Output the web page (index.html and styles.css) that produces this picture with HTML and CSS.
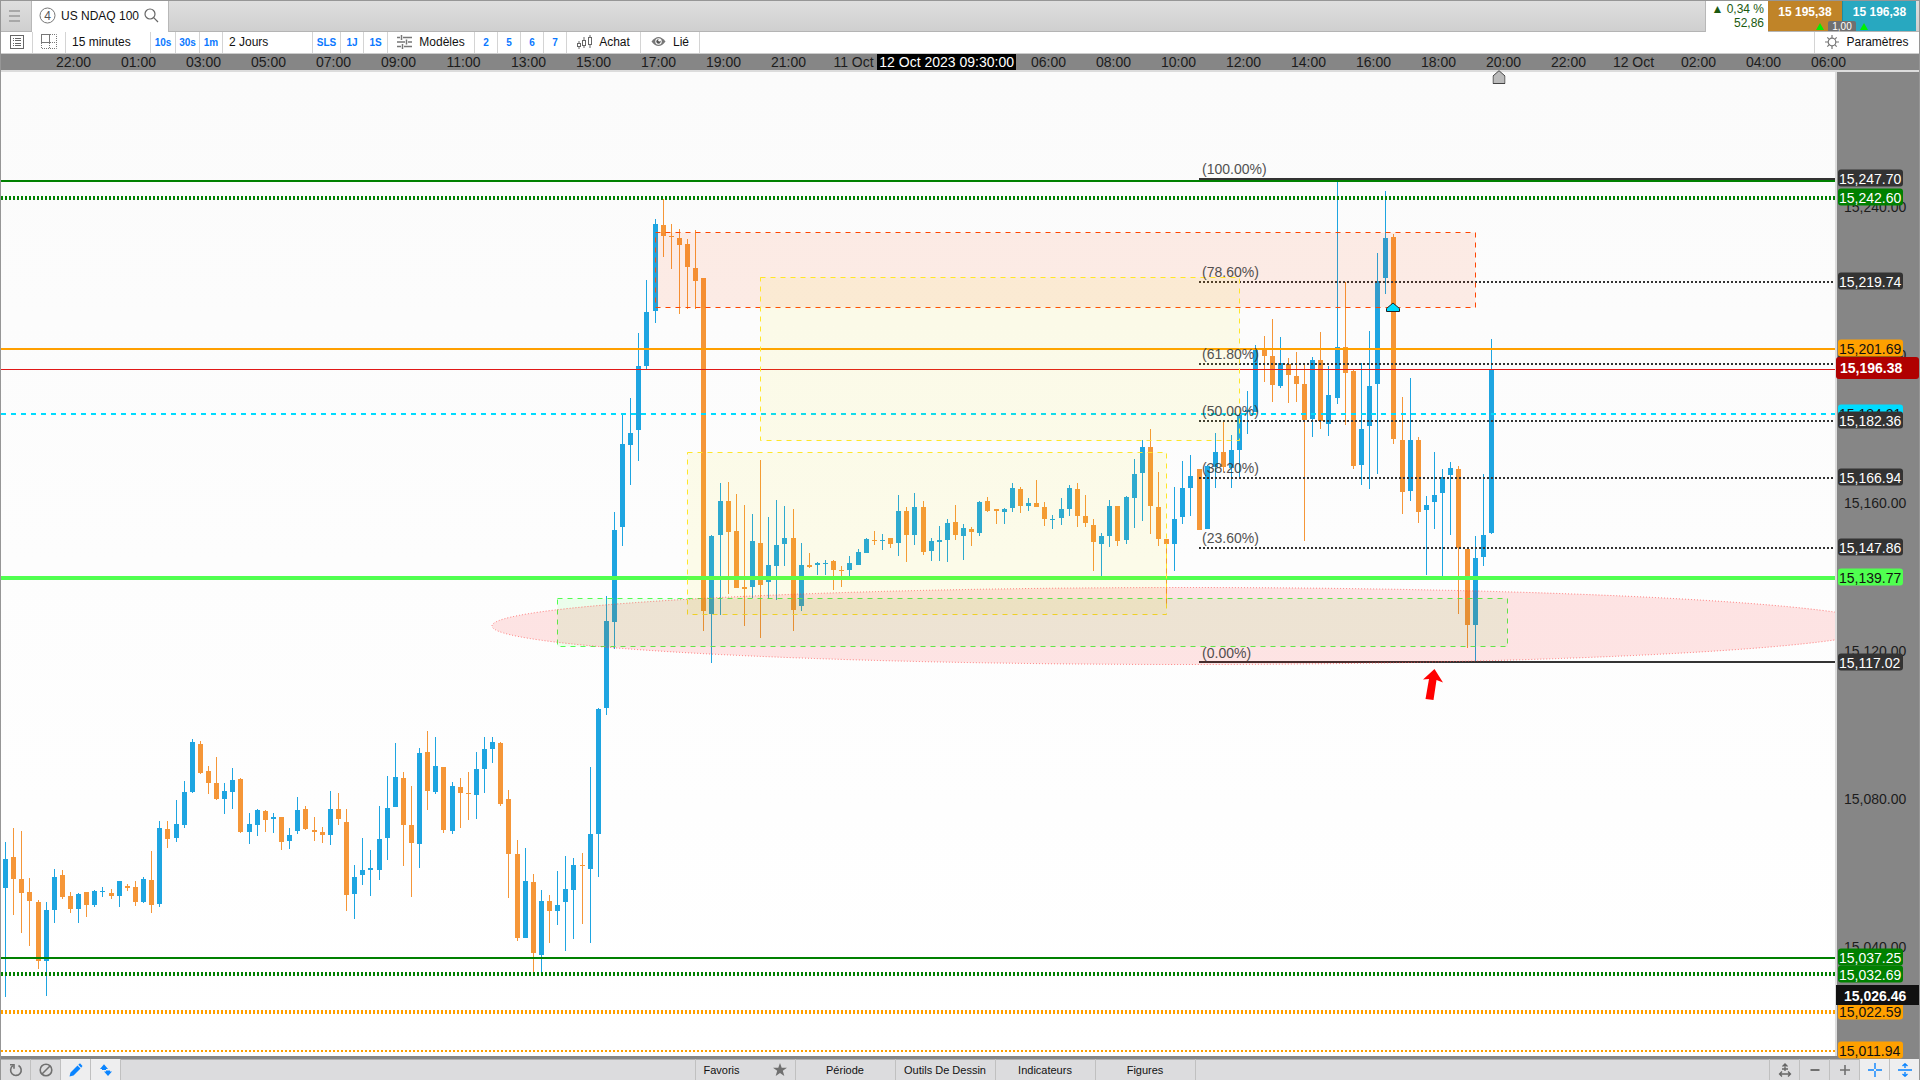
FILE: index.html
```html
<!DOCTYPE html>
<html lang="fr">
<head>
  <meta charset="UTF-8" />
  <meta name="viewport" content="width=device-width, initial-scale=1.0"/>
  <title>US NDAQ 100</title>
  <link rel="stylesheet" href="styles.css">
</head>
<body>
  <div class="app">
    <!-- Tabs and quote -->
    <header class="tabs">
      <button class="menu-btn" aria-label="Menu">
        <svg width="12" height="12" viewBox="0 0 12 12"><path d="M0 1h11M0 6h11M0 11h11" stroke="#a8a8a8" stroke-width="2"/></svg>
      </button>
      <button class="tab">
        <svg width="17" height="17" viewBox="0 0 17 17"><circle cx="8.500" cy="8.500" r="7.500" fill="none" stroke="#777"/><text x="8.500" y="12.500" text-anchor="middle" class="tab-num">4</text></svg>
        <span>US NDAQ 100</span>
        <svg width="15" height="15" viewBox="0 0 15 15" fill="none" stroke="#666" stroke-width="1.200"><circle cx="6" cy="6" r="5"/><path d="M9.700 9.700 14 14"/></svg>
      </button>
      <div class="change">
        <div><span class="up">▲</span> 0,34 %</div>
        <div>52,86</div>
      </div>
      <div class="quotes">
        <button class="quote sell">15 195,38</button>
        <button class="quote buy">15 196,38</button>
        <div class="spread"><i class="tick-up"></i><span>1,00</span><i class="tick-up"></i></div>
      </div>
    </header>

    <!-- Toolbar -->
    <nav class="toolbar">
      <button aria-label="Liste">
        <svg width="14" height="14" viewBox="0 0 14 14" fill="none" stroke="#666"><rect x=".5" y=".5" width="13" height="13"/><path d="M5 3.500h6M5 5.500h6M5 8.500h6M5 10.500h6"/><path d="M3 3.500h1M3 5.500h1M3 8.500h1M3 10.500h1"/></svg>
      </button>
      <button aria-label="Disposition">
        <svg width="16" height="15" viewBox="0 0 16 15" fill="none" stroke="#777"><rect x=".5" y=".5" width="8" height="8"/><path d="M9 .5h6.500v14H.5V9M8.500 9v5M9 8.500h6" stroke-dasharray="1 1"/></svg>
      </button>
      <button class="wide">15 minutes</button>
      <button class="quick">10s</button>
      <button class="quick">30s</button>
      <button class="quick">1m</button>
      <button class="wide">2 Jours</button>
      <button class="quick">SLS</button>
      <button class="quick">1J</button>
      <button class="quick">1S</button>
      <button>
        <svg width="15" height="14" viewBox="0 0 15 14" stroke="#777" stroke-width="1.500"><path d="M0 2.500h3M6 2.500h9M0 7h8M11 7h4M0 11.500h4M7 11.500h8M4.500 0v5M9.500 4.500v5M5.500 9v5"/></svg>
        Modèles
      </button>
      <button class="quick">2</button>
      <button class="quick">5</button>
      <button class="quick">6</button>
      <button class="quick">7</button>
      <button>
        <svg width="15" height="14" viewBox="0 0 15 14" fill="none" stroke="#666"><rect x=".5" y="8.500" width="3" height="3"/><rect x="5.500" y="5.500" width="3" height="5"/><rect x="11.500" y="2.500" width="3" height="7"/><path d="M2 6v2M2 12v2M7 2v3M7 11v2M13 0v2M13 10v3"/></svg>
        Achat
      </button>
      <button>
        <svg width="15" height="11" viewBox="0 0 15 11"><path d="M.5 5.500Q7.500-3.500 14.500 5.500 7.500 14.500.5 5.500z" fill="#777"/><circle cx="7.500" cy="5.500" r="3.200" fill="#fff"/><circle cx="7.500" cy="5.500" r="2.200" fill="#555"/><circle cx="8.500" cy="4.300" r="1.200" fill="#fff"/></svg>
        Lié
      </button>
      <span></span>
      <button class="settings">
        <svg width="14" height="14" viewBox="0 0 14 14" fill="none" stroke="#777" stroke-width="1.200"><circle cx="7" cy="7" r="3.800"/><path d="M7 0v3M7 11v3M0 7h3M11 7h3M2.300 2.300l2 2M9.700 9.700l2 2M11.700 2.300l-2 2M4.300 9.700l-2 2"/></svg>
        Paramètres
      </button>
    </nav>

    <!-- Time scale -->
    <div class="timeline">
      <span>22:00</span><span>01:00</span><span>03:00</span><span>05:00</span><span>07:00</span><span>09:00</span><span>11:00</span>
      <span>13:00</span><span>15:00</span><span>17:00</span><span>19:00</span><span>21:00</span><span>11 Oct</span>
      <span class="cursor-cell"><b class="cursor-time">12 Oct 2023 09:30:00</b></span>
      <span>06:00</span><span>08:00</span><span>10:00</span><span>12:00</span><span>14:00</span><span>16:00</span><span>18:00</span>
      <span class="now">20:00<svg width="13" height="14" viewBox="0 0 13 14"><path d="M6.500.7 12.500 6v7.500H.5V6z" fill="#bbb" stroke="#444"/></svg></span>
      <span>22:00</span><span>12 Oct</span><span>02:00</span><span>04:00</span><span>06:00</span>
    </div>

    <!-- Chart -->
    <main class="chart">
      <div class="plot" id="plot">
        <svg viewBox="1 72 1834 984" preserveAspectRatio="none">
          <g id="candles" shape-rendering="crispEdges"></g>

          <g class="levels">
            <path d="M1199 179H1835M1199 662H1835" stroke="#333" stroke-width="2"/>
            <path d="M1199 282H1835M1199 364H1835M1199 421H1835M1199 478H1835M1199 548H1835" stroke="#333" stroke-width="2" stroke-dasharray="2 2"/>
            <path d="M1 181H1835M1 958H1835" stroke="#008000" stroke-width="2"/>
            <path d="M1 198H1835M1 974H1835" stroke="#008000" stroke-width="4" stroke-dasharray="2 2"/>
            <path d="M1 1012H1835" stroke="#ffa000" stroke-width="4" stroke-dasharray="2 2"/>
            <path d="M1 1051H1835" stroke="#ffa000" stroke-width="2" stroke-dasharray="2 2"/>
            <path d="M1 349H1835" stroke="#ffa000" stroke-width="2"/>
            <path d="M1 369.500H1835" stroke="#e01818"/>
            <path d="M1 414H1835" stroke="#00dcff" stroke-width="2" stroke-dasharray="5 5"/>
            <path d="M1 578H1835" stroke="#50ff50" stroke-width="4"/>
          </g>

          <g stroke-dasharray="5 5">
            <rect x="655.500" y="232.500" width="820" height="75" fill="#ff4500" fill-opacity=".09" stroke="#ff4500"/>
            <rect x="760.500" y="277.500" width="479" height="163" fill="#f5e600" fill-opacity=".08" stroke="#ffe628"/>
            <rect x="687.500" y="452.500" width="479" height="162" fill="#f5e600" fill-opacity=".08" stroke="#ffe628"/>
            <rect x="557.500" y="598.500" width="950" height="48" fill="#50ff50" fill-opacity=".1" stroke="#50ff50"/>
          </g>
          <ellipse cx="1187" cy="626" rx="695" ry="38.500" fill="#ff0000" fill-opacity=".1" stroke="#f44" stroke-opacity=".7" stroke-dasharray="1 2"/>

          <path d="M1386.500 311.500v-3l6.500-5.500 6.500 5.500v3z" fill="#00dcff" stroke="#222"/>
          <path d="M1434.500 669 1443 682.500 1436.500 680 1433.500 700 1425.500 699 1429 679 1423 679.500z" fill="#f00"/>
        </svg>
      </div>
      <div class="axis" id="axis"></div>
    </main>

    <!-- Bottom bar -->
    <footer class="bottombar">
      <button class="tool" aria-label="Recharger">
        <svg width="14" height="14" viewBox="0 0 14 14" fill="none" stroke="#707070" stroke-width="1.600"><path d="M9.500 2.500A5.300 5.300 0 1 1 4 2.700"/><path d="M1 1.700h4v4"/></svg>
      </button>
      <button class="tool" aria-label="Masquer">
        <svg width="14" height="14" viewBox="0 0 14 14" fill="none" stroke="#707070" stroke-width="1.600"><circle cx="7" cy="7" r="5.800"/><path d="M3 11l8-8"/></svg>
      </button>
      <button class="tool on" aria-label="Dessiner">
        <svg width="14" height="14" viewBox="0 0 14 14" fill="#0a84ff"><path d="M.5 13.500 1.500 9.500 8.500 2.500 11.500 5.500 4.500 12.500zM9.300 1.700 11 .3 13.500 3 12.200 4.700z"/></svg>
      </button>
      <button class="tool on" aria-label="Ordre">
        <svg width="12" height="12" viewBox="0 0 12 12" fill="#0a84ff"><path d="M0 5 4 .3 8 5H6v1H2V5zM4 7.500h2v-1h4v1h2L8 12z"/></svg>
      </button>
      <div class="panels">
        <button class="fav">Favoris
          <svg width="14" height="13" viewBox="0 0 14 13" fill="#707070"><path d="M7 0l1.700 4.700H14L9.800 7.800 11.300 13 7 9.900 2.700 13l1.500-5.200L0 4.700h5.300z"/></svg>
        </button>
        <button>Période</button>
        <button>Outils De Dessin</button>
        <button>Indicateurs</button>
        <button>Figures</button>
      </div>
      <button class="tool left" aria-label="Ajuster">
        <svg width="14" height="14" viewBox="0 0 14 14" fill="none" stroke="#666" stroke-width="1.300"><path d="M7 1v7M4.500 3.500 7 1l2.500 2.500M4 6h6M1.500 11h11M4 8.500 1.500 11 4 13.500M10 8.500l2.500 2.500-2.500 2.500"/></svg>
      </button>
      <button class="tool left" aria-label="Zoom arrière">
        <svg width="12" height="12" viewBox="0 0 12 12"><path d="M1.500 6h9" stroke="#707070" stroke-width="2"/></svg>
      </button>
      <button class="tool left" aria-label="Zoom avant">
        <svg width="12" height="12" viewBox="0 0 12 12"><path d="M1 6h10M6 1v10" stroke="#707070" stroke-width="1.600"/></svg>
      </button>
      <button class="tool left on" aria-label="Réticule">
        <svg width="14" height="14" viewBox="0 0 14 14"><path d="M0 7h6M8 7h6M7 0v6M7 8v6" stroke="#0a84ff" stroke-width="1.400"/></svg>
      </button>
      <button class="tool left on" aria-label="Échelle verticale">
        <svg width="14" height="14" viewBox="0 0 14 14" fill="none" stroke="#0a84ff" stroke-width="1.400"><path d="M0 7h14M7 5V1M4.500 3 7 .8 9.500 3M7 9v4M4.500 11 7 13.200 9.500 11"/></svg>
      </button>
    </footer>
  </div>

  <script src="script.js"></script>
</body>
</html>
```
FILE: styles.css
```css
* {
  box-sizing: border-box;
}

body {
  margin: 0;
  font-family: "Liberation Sans", Arial, sans-serif;
  font-size: 12px;
  color: #111;
  overflow: hidden;
}

button {
  font: inherit;
  color: inherit;
  background: none;
  border: none;
  padding: 0;
  white-space: nowrap;
  cursor: pointer;
}

svg {
  display: block;
  flex: none;
}

.app {
  display: flex;
  flex-direction: column;
  height: 100vh;
  border: 1px solid #969696;
  border-bottom: none;
}

/* tabs */
.tabs {
  display: flex;
  height: 31px;
  padding-right: 3px;
  background: linear-gradient(#dedede, #cfcfcf);
  border-bottom: 1px solid #b4b4b4;
}

.menu-btn {
  display: flex;
  align-items: center;
  justify-content: center;
  width: 31px;
  padding-right: 2px;
  border-right: 1px solid #b8b8b8;
}

.tab {
  display: flex;
  align-items: center;
  gap: 5px;
  height: 31px;
  padding: 0 9px 2px 7px;
  background: #fff;
  border-right: 1px solid #b8b8b8;
}

.tab-num {
  font-size: 12px;
  fill: #555;
}

.change {
  width: 63px;
  height: 31px;
  margin-left: auto;
  padding: 1px 4px 0 0;
  border-left: 1px solid #b8b8b8;
  background: #fff;
  color: #1c5a10;
  line-height: 14px;
  text-align: right;
}

.up {
  font-size: 12px;
}

.quotes {
  position: relative;
  display: flex;
}

.quote {
  width: 74px;
  padding-bottom: 9px;
  color: #fff;
  font-weight: bold;
}

.sell {
  background: #c08428;
}

.buy {
  background: #28a8c0;
  border-left: 1px solid #1c8ca4;
}

.spread {
  position: absolute;
  left: 0;
  right: 0;
  bottom: 0;
  display: flex;
  justify-content: center;
  align-items: center;
  gap: 4px;
  pointer-events: none;
}

.spread span {
  width: 28px;
  height: 10px;
  border-radius: 2px 2px 0 0;
  background: #707070;
  color: #fff;
  font-size: 10px;
  line-height: 11px;
  text-align: center;
}

.tick-up {
  border: 4px solid transparent;
  border-top: none;
  border-bottom: 7px solid #00f000;
}

/* toolbar */
.toolbar {
  display: grid;
  grid-template-columns: 32px 33px 85px 25px 24px 23px 90px 28px 23px 24px 87px 23px 23px 23px 23px 74px 59px 1fr 105px;
  height: 22px;
  background: #fff;
  border-bottom: 1px solid #ccc;
}

.toolbar button {
  display: flex;
  align-items: center;
  justify-content: center;
  gap: 7px;
  padding-bottom: 2px;
  border-right: 1px solid #d4d4d4;
}

.toolbar .wide {
  justify-content: flex-start;
  padding-left: 6px;
}

.toolbar .quick {
  padding-bottom: 0;
  color: #0a78ff;
  font-size: 10px;
  font-weight: bold;
}

.toolbar .settings {
  border-left: 1px solid #d4d4d4;
  border-right: none;
}

/* time scale */
.timeline {
  display: grid;
  grid-template-columns: repeat(28, 1fr);
  height: 18px;
  padding: 0 58px 0 40px;
  background: #868686;
  border-bottom: 2px solid #dcdcdc;
  color: #1c1c1c;
  font-size: 14px;
  line-height: 16px;
  text-align: center;
  white-space: nowrap;
}

.cursor-cell {
  position: relative;
  grid-column: span 2;
}

.cursor-time {
  position: absolute;
  right: 0;
  padding: 0 2px;
  background: #000;
  color: #fff;
  font-weight: normal;
}

.now {
  position: relative;
}

.now svg {
  position: absolute;
  top: 16px;
  left: 43%;
  transform: translateX(-50%);
  z-index: 1;
}

/* chart */
.chart {
  display: flex;
  flex: 1;
  min-height: 0;
}

.plot {
  position: relative;
  flex: 1;
  min-width: 0;
  background: linear-gradient(#fbfbfb, #fff);
}

.plot svg {
  width: 100%;
  height: 100%;
}

.candle-up {
  fill: #1ea5e1;
}

.candle-down {
  fill: #f59638;
}

.levels {
  fill: none;
}

.fib-label {
  position: absolute;
  left: 65%;
  margin: -17px 0 0 9px;
  color: #333;
  font-size: 14px;
  line-height: 16px;
  opacity: 0.85;
}

.axis {
  position: relative;
  width: 84px;
  border-left: 2px solid #dcdcdc;
  background: #868686;
  font-size: 14px;
}

.price {
  position: absolute;
  left: 1px;
  width: 65px;
  height: 17px;
  padding-left: 1px;
  border-radius: 3px;
  line-height: 18px;
  transform: translateY(-50%);
}

.price.tick {
  left: 6px;
  color: #1c1c1c;
}

.price.dark {
  background: #333;
  color: #fff;
}

.price.green {
  background: #008000;
  color: #fff;
}

.price.orange {
  background: #ffa000;
  color: #111;
}

.price.cyan {
  background: #00dcff;
  color: #111;
}

.price.lime {
  background: #50ff50;
  color: #111;
}

.price.last,
.price.cursor {
  left: -1px;
  right: 0;
  width: auto;
  height: 22px;
  padding-left: 4px;
  color: #fff;
  font-weight: bold;
  line-height: 22px;
}

.price.last {
  background: #b00000;
}

.price.cursor {
  height: 20px;
  margin-top: -2px;
  padding-left: 8px;
  border-radius: 0;
  background: #111;
}

/* bottom bar */
.bottombar {
  display: flex;
  height: 24px;
  border-top: 3px solid #868686;
  background: #dcdcde;
  box-shadow: inset 0 1px #b0b0b0;
  font-size: 11px;
}

.tool {
  display: flex;
  align-items: center;
  justify-content: center;
  width: 30px;
  border-right: 1px solid #c0c0c0;
}

.tool.left {
  border-right: none;
  border-left: 1px solid #c0c0c0;
}

.tool.on {
  background: #eeeeef;
}

.panels {
  display: grid;
  grid-template-columns: repeat(5, 100px);
  margin: 0 auto;
  border-left: 1px solid #c0c0c0;
}

.panels button {
  border-right: 1px solid #c0c0c0;
}

.panels .fav {
  display: flex;
  align-items: center;
  justify-content: space-between;
  padding: 0 8px;
}
```
FILE: script.js
```js
// x, high, body top, body bottom, low, direction (1 = up, 0 = down)
const candles = [
  [5,842,859,888,997,1],[13,828,857,879,915,0],[21,831,879,893,933,0],[29,878,892,901,946,0],
  [38,900,902,961,969,0],[46,902,910,961,996,1],[54,869,877,910,923,1],[62,870,875,897,899,0],
  [70,892,896,909,913,0],[78,893,894,909,923,1],[86,892,892,905,917,0],[94,890,891,905,907,1],
  [102,887,891,892,897,1],[111,889,893,896,899,0],[119,881,881,896,907,1],[127,884,886,888,891,0],
  [135,881,887,902,906,0],[143,877,879,902,903,1],[151,851,880,905,913,0],[159,821,828,904,907,1],
  [167,821,829,839,848,0],[176,800,824,838,842,1],[184,781,792,825,828,1],[192,739,742,792,793,1],
  [200,741,744,773,774,0],[208,766,771,783,794,0],[216,757,783,799,800,0],[224,783,791,799,814,1],
  [232,768,780,792,809,1],[240,778,779,832,833,0],[249,813,824,832,844,1],[257,809,810,825,836,1],
  [265,810,811,820,832,0],[273,813,817,819,833,1],[281,817,817,842,850,0],[289,828,835,841,849,1],
  [297,797,810,831,834,1],[305,806,809,829,830,0],[314,817,830,832,841,0],[322,827,832,835,843,0],
  [330,791,809,835,845,1],[338,793,809,819,825,0],[346,809,822,895,911,0],[354,865,877,894,919,1],
  [362,838,870,875,885,1],[370,850,868,870,896,1],[379,806,839,870,880,1],[387,776,808,838,860,1],
  [395,743,777,807,807,1],[403,772,778,825,866,0],[411,786,825,843,897,0],[419,748,753,844,868,1],
  [427,731,752,791,810,0],[435,737,766,792,794,1],[443,767,767,830,833,0],[452,782,786,831,834,1],
  [460,778,787,793,828,0],[468,772,793,794,820,0],[476,752,769,795,819,1],[484,737,749,769,793,1],
  [492,737,742,749,763,1],[500,742,743,804,806,0],[508,790,799,854,898,0],[517,840,854,938,941,0],
  [525,848,881,938,938,1],[533,874,882,953,972,0],[541,890,901,955,972,1],[549,895,901,911,943,0],
  [557,871,905,911,925,1],[565,856,889,902,951,1],[573,858,865,890,939,1],[582,853,865,866,924,0],
  [590,767,834,869,943,1],[598,708,709,834,877,1],[606,596,621,708,715,1],[614,512,530,622,649,1],
  [622,415,444,527,546,1],[630,398,433,445,485,1],[638,333,366,430,461,1],[646,280,312,366,369,1],
  [655,219,224,311,323,1],[663,199,225,236,257,0],[671,224,236,237,269,0],[679,229,238,245,314,0],
  [687,239,244,267,309,0],[695,230,268,281,309,0],[703,278,278,611,631,0],[711,535,536,614,663,1],
  [720,483,501,535,615,1],[728,482,501,532,594,0],[736,494,531,588,588,0],[744,505,587,589,626,0],
  [752,514,541,587,598,1],[760,460,543,585,638,0],[768,517,565,582,598,1],[776,500,545,566,600,1],
  [784,506,538,544,566,1],[793,509,538,610,631,0],[801,543,565,606,611,1],[809,553,565,567,568,0],
  [817,562,563,565,575,1],[825,560,563,564,575,1],[833,560,561,570,590,0],[841,566,570,571,587,0],
  [849,556,563,570,576,1],[858,549,552,565,565,1],[866,538,539,553,553,1],[874,531,540,541,545,0],
  [882,534,540,541,550,1],[890,538,538,544,548,0],[898,495,511,543,556,1],[906,507,511,535,562,0],
  [914,493,507,535,545,1],[923,501,507,552,555,0],[931,538,541,551,561,1],[939,526,540,542,561,1],
  [947,519,523,540,562,1],[955,505,522,535,540,0],[963,524,528,536,560,1],[971,527,529,532,546,0],
  [979,501,502,533,536,1],[987,497,501,511,512,0],[996,509,509,511,524,0],[1004,508,509,512,524,1],
  [1012,483,488,508,512,1],[1020,487,489,506,513,0],[1028,498,503,506,511,1],[1036,480,503,507,507,0],
  [1044,502,507,519,526,0],[1052,515,519,520,529,1],[1061,498,509,518,525,1],[1069,485,488,509,516,1],
  [1077,483,489,516,527,0],[1085,495,516,523,527,0],[1093,519,525,542,571,0],[1101,533,536,544,576,1],
  [1109,500,506,536,547,1],[1117,506,506,541,546,0],[1126,496,497,540,544,1],[1134,459,474,498,528,1],
  [1142,440,447,473,521,1],[1150,429,447,506,534,0],[1158,472,507,539,546,0],[1166,539,539,544,604,0],
  [1174,487,519,544,571,1],[1182,461,488,517,524,1],[1190,455,476,488,516,1],[1199,469,469,530,530,0],
  [1207,465,466,529,529,1],[1215,433,452,467,488,1],[1223,422,452,467,472,0],[1231,435,450,468,488,1],
  [1239,410,415,450,478,1],[1247,391,410,412,434,1],[1255,345,350,412,412,1],[1264,336,349,356,382,0],
  [1272,319,356,385,402,0],[1280,337,363,386,388,1],[1288,358,364,375,403,0],[1296,352,376,384,402,0],
  [1304,364,384,420,541,0],[1312,357,360,419,437,1],[1320,332,360,421,429,0],[1328,366,395,424,436,1],
  [1337,182,347,398,404,1],[1345,282,347,373,425,0],[1353,369,371,466,469,0],[1361,363,429,465,485,1],
  [1369,331,386,426,489,1],[1377,253,281,384,474,1],[1385,191,238,278,294,1],[1393,234,237,439,444,0],
  [1402,397,440,492,514,0],[1410,378,440,491,501,1],[1418,437,440,512,523,0],[1426,496,505,510,575,1],
  [1434,452,495,502,529,1],[1442,469,477,493,576,1],[1450,462,468,475,535,1],[1458,466,469,548,614,0],
  [1467,549,549,625,648,0],[1475,536,558,625,661,1],[1483,474,535,557,566,1],[1491,339,369,533,534,1]
];

const svgNS = "http://www.w3.org/2000/svg";
const candleGroup = document.getElementById("candles");

candles.forEach(([x, high, top, bottom, low, up]) => {
  const path = document.createElementNS(svgNS, "path");
  path.setAttribute("d", `M${x} ${high}h1V${low}h-1zM${x - 2} ${top}h5V${bottom}h-5z`);
  path.setAttribute("class", up ? "candle-up" : "candle-down");
  candleGroup.appendChild(path);
});

// vertical position of a price, in percent of the chart height
function priceTop(price) {
  return ((15247.7 - price) * 3.7 + 106) / 984 * 100 + "%";
}

function addLabel(parent, className, price, text) {
  const label = document.createElement("span");
  label.className = className;
  label.textContent = text;
  label.style.top = priceTop(price);
  parent.appendChild(label);
}

const prices = [
  [15240, "tick"], [15200, "tick"], [15160, "tick"], [15120, "tick"], [15080, "tick"], [15040, "tick"],
  [15242.60, "green"], [15247.70, "dark"], [15219.74, "dark"], [15197.78, "dark"], [15201.69, "orange"],
  [15184.21, "cyan"], [15182.36, "dark"], [15166.94, "dark"], [15147.86, "dark"], [15139.77, "lime"],
  [15117.02, "dark"], [15037.25, "green"], [15032.69, "green"], [15022.59, "orange"], [15011.94, "orange"],
  [15196.38, "last"], [15026.46, "cursor"]
];
const axis = document.getElementById("axis");
prices.forEach(([price, type]) => {
  addLabel(axis, "price " + type, price, price.toLocaleString("en-US", { minimumFractionDigits: 2 }));
});

const fib = [
  [15247.70, "100.00"], [15219.74, "78.60"], [15197.78, "61.80"], [15182.36, "50.00"],
  [15166.94, "38.20"], [15147.86, "23.60"], [15117.02, "0.00"]
];
const plot = document.getElementById("plot");
fib.forEach(([price, level]) => addLabel(plot, "fib-label", price, `(${level}%)`));
```
